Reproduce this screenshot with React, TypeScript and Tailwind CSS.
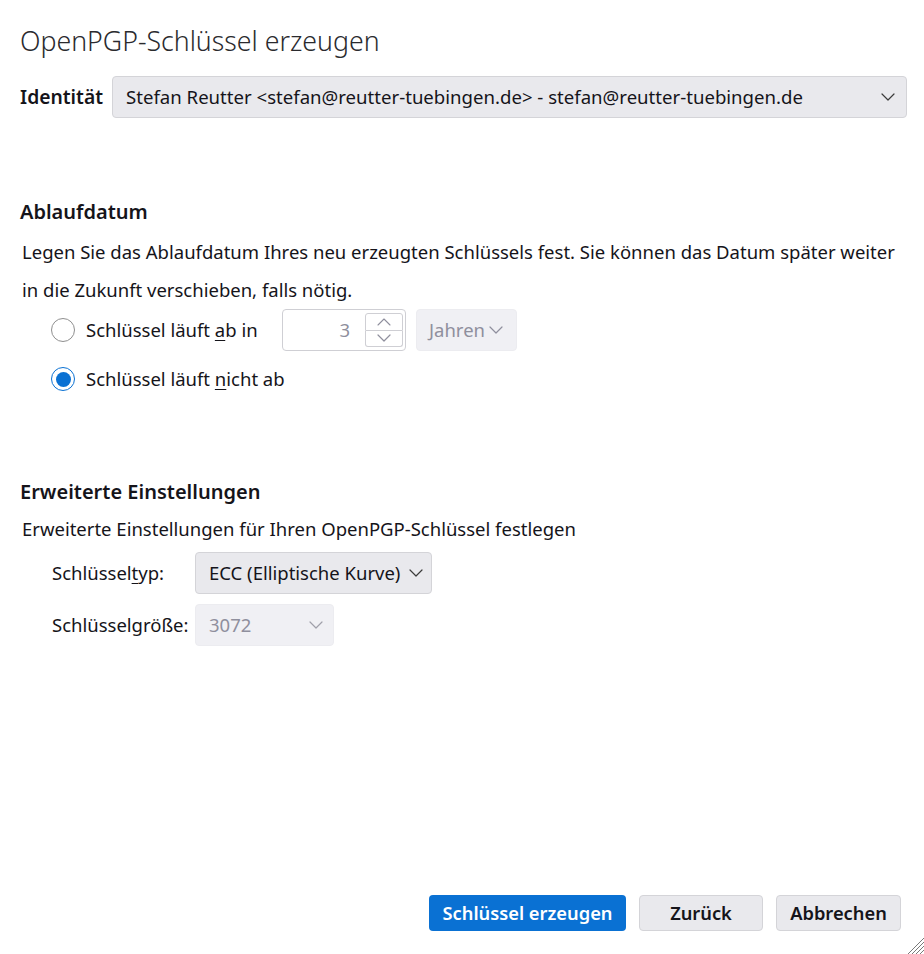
import React from "react";

function Chevron({ className = "", color = "#3b3b3b" }: { className?: string; color?: string }) {
  return (
    <svg className={className} width="14" height="8" viewBox="0 0 14 8" fill="none">
      <path d="M1 1 L7 7 L13 1" stroke={color} strokeWidth="1.2" strokeLinecap="round" strokeLinejoin="round" />
    </svg>
  );
}

function Radio({ checked }: { checked: boolean }) {
  if (checked) {
    return (
      <span className="w-[24px] h-[24px] rounded-full border-[1.5px] border-[#0a71d3] bg-white flex items-center justify-center shrink-0">
        <span className="w-[15px] h-[15px] rounded-full bg-[#0a71d3]" />
      </span>
    );
  }
  return <span className="w-[24px] h-[24px] rounded-full border border-[#8f8f8f] bg-white shrink-0" />;
}

export default function App() {
  return (
    <div
      className="relative w-[924px] h-[954px] bg-white text-[#15141a] flex flex-col overflow-hidden"
      style={{ fontFamily: '"Noto Sans", "Open Sans", sans-serif' }}
    >
      <div className="pl-[20px] pt-[22px] text-[26.7px] leading-[38px] font-light text-[#2a2a2e]">
        OpenPGP-Schlüssel erzeugen
      </div>

      <div className="mt-[16px] pl-[20px] pr-[17px] flex items-center">
        <span className="text-[19.3px] font-semibold w-[92px]">Identität</span>
        <div className="flex-1 h-[42px] rounded-[4px] bg-[#e9e9ed] border border-[#d4d4d8] flex items-center pl-[13px] pr-[11px]">
          <span className="flex-1 text-[18.6px] whitespace-nowrap">
            Stefan Reutter &lt;stefan@reutter-tuebingen.de&gt; - stefan@reutter-tuebingen.de
          </span>
          <Chevron />
        </div>
      </div>

      <div className="mt-[80px] pl-[20px] text-[20px] leading-[28px] font-semibold">Ablaufdatum</div>
      <div className="mt-[7px] pl-[22px] pr-[20px] text-[18.5px] leading-[38px]">
        Legen Sie das Ablaufdatum Ihres neu erzeugten Schlüssels fest. Sie können das Datum später weiter in die Zukunft verschieben, falls nötig.
      </div>

      <div className="mt-0 pl-[51px] flex items-center h-[42px]">
        <Radio checked={false} />
        <span className="ml-[11px] text-[18.5px] w-[196px]">
          Schlüssel läuft <span className="underline underline-offset-[3px]">a</span>b in
        </span>
        <div className="w-[124px] h-[42px] rounded-[4px] border border-[#cfcfd4] bg-white flex items-center justify-end pr-[2px]">
          <span className="text-[18.5px] text-[#8f8f9d] mr-[15px]">3</span>
          <div className="w-[38px] h-[34px] flex flex-col">
            <div className="flex-1 border border-[#cfcfd4] rounded-t-[3px] flex items-center justify-center">
              <svg width="14" height="8" viewBox="0 0 14 8" fill="none">
                <path d="M1 7 L7 1 L13 7" stroke="#8f8f9d" strokeWidth="1.1" strokeLinecap="round" strokeLinejoin="round" />
              </svg>
            </div>
            <div className="flex-1 border border-t-0 border-[#cfcfd4] rounded-b-[3px] flex items-center justify-center">
              <Chevron color="#8f8f9d" />
            </div>
          </div>
        </div>
        <div className="ml-[10px] w-[101px] h-[42px] rounded-[4px] bg-[#f0f0f4] border border-[#ececf0] flex items-center pl-[12px] gap-[4px]">
          <span className="text-[18.5px] text-[#8f8f9d]">Jahren</span>
          <Chevron color="#8f8f9d" />
        </div>
      </div>

      <div className="mt-[7px] pl-[51px] flex items-center h-[42px]">
        <Radio checked />
        <span className="ml-[11px] text-[18.5px]">
          Schlüssel läuft <span className="underline underline-offset-[3px]">n</span>icht ab
        </span>
      </div>

      <div className="mt-[78px] pl-[20px] text-[20px] leading-[28px] font-semibold">Erweiterte Einstellungen</div>
      <div className="mt-[9px] pl-[22px] text-[18.5px] leading-[28px]">
        Erweiterte Einstellungen für Ihren OpenPGP-Schlüssel festlegen
      </div>

      <div className="mt-[9px] pl-[52px] flex items-center h-[42px]">
        <span className="text-[18.5px] w-[143px]">
          Schlüssel<span className="underline underline-offset-[3px]">t</span>yp:
        </span>
        <div className="w-[237px] h-[42px] rounded-[4px] bg-[#e9e9ed] border border-[#d4d4d8] flex items-center pl-[13px] pr-[8px]">
          <span className="flex-1 text-[18.5px] whitespace-nowrap">ECC (Elliptische Kurve)</span>
          <Chevron />
        </div>
      </div>

      <div className="mt-[10px] pl-[52px] flex items-center h-[42px]">
        <span className="text-[18.5px] w-[143px]">Schlüsselgröße:</span>
        <div className="w-[139px] h-[42px] rounded-[4px] bg-[#f0f0f4] border border-[#ececf0] flex items-center pl-[13px] pr-[10px]">
          <span className="flex-1 text-[18.5px] text-[#8f8f9d]">3072</span>
          <Chevron color="#a0a0aa" />
        </div>
      </div>

      <div className="mt-auto mb-[23px] pr-[23px] flex justify-end gap-[13px]">
        <button className="w-[197px] h-[36px] rounded-[4px] bg-[#0a71d3] text-white text-[18.3px] font-semibold">
          Schlüssel erzeugen
        </button>
        <button className="w-[124px] h-[36px] rounded-[4px] bg-[#e9e9ed] border border-[#d4d4d8] text-[18.3px] font-semibold">
          Zurück
        </button>
        <button className="w-[125px] h-[36px] rounded-[4px] bg-[#e9e9ed] border border-[#d4d4d8] text-[18.3px] font-semibold">
          Abbrechen
        </button>
      </div>

      <svg className="absolute right-0 bottom-0" width="20" height="20" viewBox="0 0 20 20" fill="none">
        <path d="M4 20 L20 4 M8 20 L20 8 M12 20 L20 12 M16 20 L20 16" stroke="#7a7a7a" strokeWidth="1" />
      </svg>
    </div>
  );
}
